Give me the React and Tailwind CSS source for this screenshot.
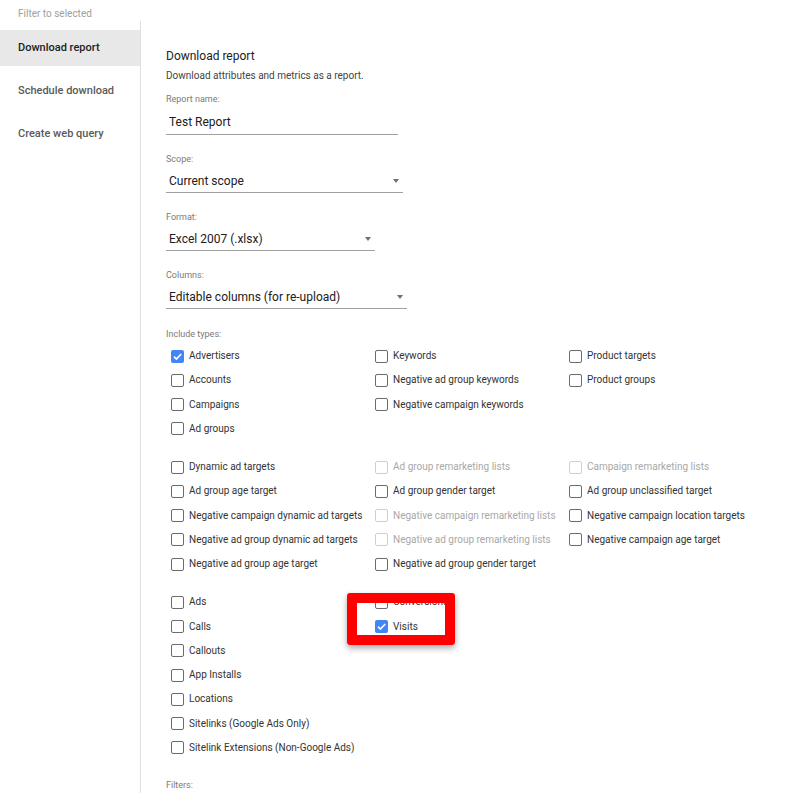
import React from 'react';

const font = { fontFamily: "Roboto, 'Liberation Sans', sans-serif" };

// each group is a list of columns, each column a list of checkbox rows
const groups = [
  [
    [{ label: 'Advertisers', checked: true }, { label: 'Accounts' }, { label: 'Campaigns' }, { label: 'Ad groups' }],
    [{ label: 'Keywords' }, { label: 'Negative ad group keywords' }, { label: 'Negative campaign keywords' }],
    [{ label: 'Product targets' }, { label: 'Product groups' }],
  ],
  [
    [
      { label: 'Dynamic ad targets' },
      { label: 'Ad group age target' },
      { label: 'Negative campaign dynamic ad targets' },
      { label: 'Negative ad group dynamic ad targets' },
      { label: 'Negative ad group age target' },
    ],
    [
      { label: 'Ad group remarketing lists', disabled: true },
      { label: 'Ad group gender target' },
      { label: 'Negative campaign remarketing lists', disabled: true },
      { label: 'Negative ad group remarketing lists', disabled: true },
      { label: 'Negative ad group gender target' },
    ],
    [
      { label: 'Campaign remarketing lists', disabled: true },
      { label: 'Ad group unclassified target' },
      { label: 'Negative campaign location targets' },
      { label: 'Negative campaign age target' },
    ],
  ],
  [
    [
      { label: 'Ads' },
      { label: 'Calls' },
      { label: 'Callouts' },
      { label: 'App Installs' },
      { label: 'Locations' },
      { label: 'Sitelinks (Google Ads Only)' },
      { label: 'Sitelink Extensions (Non-Google Ads)' },
    ],
    [{ label: 'Conversions' }, { label: 'Visits', checked: true }],
    [],
  ],
];

const colWidths = ['w-[204px]', 'w-[194px]', 'flex-1'];

const Checkbox = ({ label, checked, disabled }) => (
  <div className="flex items-center h-[24.25px] pl-[5px]">
    {checked ? (
      <span className="w-[13px] h-[13px] rounded-[2px] bg-[#4285f4] flex items-center justify-center">
        <svg width="11" height="11" viewBox="0 0 11 11">
          <path d="M2 5.6 L4.4 8 L9.2 3" fill="none" stroke="white" strokeWidth="1.6" />
        </svg>
      </span>
    ) : (
      <span
        className={`w-[13px] h-[13px] rounded-[2px] border-[1.5px] ${
          disabled ? 'border-[#cfcfcf]' : 'border-[#6b6b6b]'
        }`}
      ></span>
    )}
    <span
      className={`ml-[5px] text-[10px] leading-none whitespace-nowrap ${
        disabled ? 'text-[#a8a8a8]' : 'text-[#333333]'
      }`}
    >
      {label}
    </span>
  </div>
);

const Label = ({ children }) => (
  <div className="h-[14px] leading-[14px] text-[9px] text-[#7a7a7a]">{children}</div>
);

const Select = ({ label, value, width }) => (
  <div className="mt-[17px]">
    <Label>{label}</Label>
    <div className={`mt-[3px] h-6 flex items-center justify-between border-b border-[#a0a0a0] pl-[3px] pr-[4px] ${width}`}>
      <span className="text-[12px] text-[#202020]">{value}</span>
      <span className="w-0 h-0 border-l-[3.5px] border-r-[3.5px] border-t-[4px] border-l-transparent border-r-transparent border-t-[#707070]"></span>
    </div>
  </div>
);

const App = () => {
  return (
    <div className="min-h-screen bg-white flex flex-col" style={font}>
      {/* Top strip */}
      <div className="h-[21px] pt-[7px] pl-[18px] text-[10px] leading-[14px] text-[#9e9e9e]">Filter to selected</div>

      <div className="flex flex-1">
        {/* Sidebar */}
        <div className="w-[141px] shrink-0 border-r border-[#e0e0e0] pt-[9px] flex flex-col gap-[7px]">
          <div className="h-9 flex items-center pl-[18px] bg-[#e8e8e8] text-[11px] font-medium text-[#222222]">
            Download report
          </div>
          <div className="h-9 flex items-center pl-[18px] text-[11px] font-medium text-[#5a5a5a]">
            Schedule download
          </div>
          <div className="h-9 flex items-center pl-[18px] text-[11px] font-medium text-[#5a5a5a]">
            Create web query
          </div>
        </div>

        {/* Main */}
        <div className="flex-1 pl-[25px] pt-[27px]">
          <div className="h-4 leading-4 text-[12px] text-[#222222]">Download report</div>
          <div className="mt-[5px] h-[14px] leading-[14px] text-[10px] text-[#444444]">
            Download attributes and metrics as a report.
          </div>

          <div className="mt-[9px]">
            <Label>Report name:</Label>
            <div className="mt-[3px] h-[26px] w-[232px] flex items-center border-b border-[#a0a0a0] pl-[3px]">
              <span className="text-[12px] text-[#202020]">Test Report</span>
            </div>
          </div>

          <div className="mt-[1px]">
            <Select label="Scope:" value="Current scope" width="w-[237px]" />
          </div>
          <Select label="Format:" value="Excel 2007 (.xlsx)" width="w-[209px]" />
          <Select label="Columns:" value="Editable columns (for re-upload)" width="w-[241px]" />

          <div className="mt-[18px]">
            <Label>Include types:</Label>
          </div>

          {groups.map((group, gi) => (
            <div key={gi} className={`relative flex ${gi === 0 ? 'mt-[3px]' : 'mt-[14px]'}`}>
              {group.map((col, ci) => (
                <div key={ci} className={`flex flex-col ${colWidths[ci]}`}>
                  {col.map((item) => (
                    <Checkbox key={item.label} {...item} />
                  ))}
                </div>
              ))}
              {gi === 2 && (
                <div className="absolute left-[181px] top-[3px] w-[108px] h-[52px] border-[10px] border-[#ff0000] rounded-[3px] shadow-[0_3px_6px_rgba(0,0,0,0.35)]"></div>
              )}
            </div>
          ))}

          <div className="mt-[18px] pb-2">
            <Label>Filters:</Label>
          </div>
        </div>
      </div>
    </div>
  );
};

export default App;
